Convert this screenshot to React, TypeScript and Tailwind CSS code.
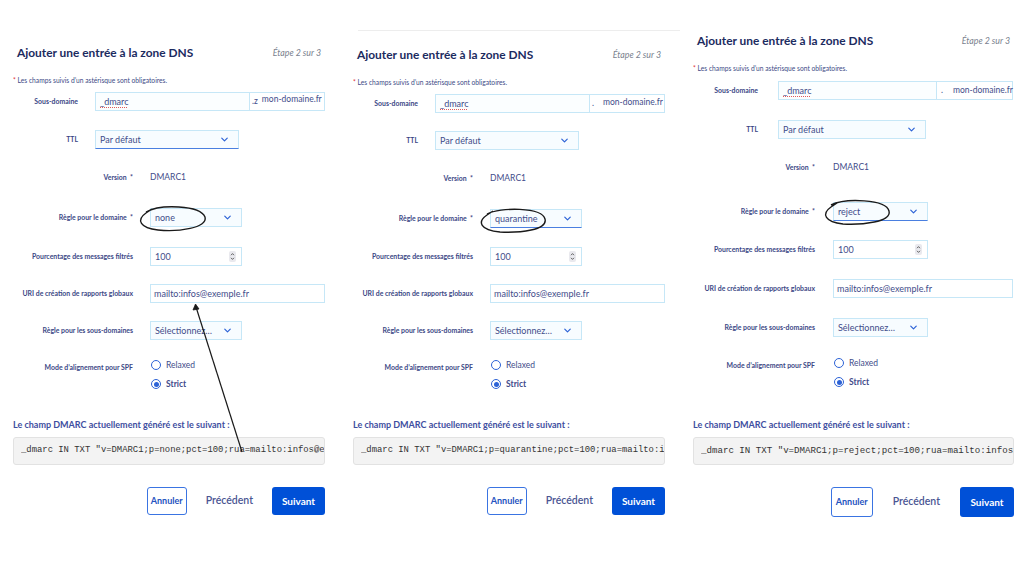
import React from "react";
import { ChevronDown } from "lucide-react";

type Cfg = {
  policy: string;
  wrap: string;
  topRule: boolean;
  header: string;
  noteMt: string;
  g1Label: string;
  g1Gap: string;
  g2Label: string;
  g2Gap: string;
  subW: string;
  sufW: string;
  ttlW: string;
  smallW: string;
  uriW: string;
  mts: string[];
  radiosMt: string;
  codeLabelMt: string;
  codeText: string;
  btnMt: string;
  btnH: string;
  annulerW: string;
  suivantW: string;
  btnGap: string;
  ttlFocus: boolean;
  ruleFocus: boolean;
  suffix: React.ReactNode;
};

const FONT = "font-['Lato','Open_Sans',sans-serif]";

function Label({ children, w }: { children: React.ReactNode; w: string }) {
  return (
    <div className={`${w} shrink-0 whitespace-nowrap text-right text-[6.9px] font-bold leading-none text-[#3b4785]`}>
      {children}
    </div>
  );
}

function Chevron() {
  return <ChevronDown size={11} strokeWidth={2.6} className="text-[#2c62d6]" />;
}

function Select({ value, w, focus }: { value: string; w: string; focus?: boolean }) {
  return (
    <div
      className={`${w} h-full flex items-center justify-between pl-[4px] pr-[8px] border border-[#c6e7f7] bg-[#f7fcff] ${
        focus ? "border-b-[#4a7fe0] border-b-[1.5px]" : ""
      }`}
    >
      <span className="text-[9px] text-[#3f4c8a]">{value}</span>
      <Chevron />
    </div>
  );
}

function Radio({ checked, label }: { checked?: boolean; label: string }) {
  return (
    <div className="flex h-[14px] items-center gap-[5px] pl-[1px]">
      <span className="flex h-[10px] w-[10px] items-center justify-center rounded-full border-[1.5px] border-[#2c62d6] bg-white">
        {checked && <span className="h-[5px] w-[5px] rounded-full bg-[#2c62d6]" />}
      </span>
      <span className={`text-[8.5px] text-[#3f4c8a] ${checked ? "font-bold" : ""}`}>{label}</span>
    </div>
  );
}

function Spinner() {
  return (
    <span className="flex h-[11px] w-[7px] flex-col items-center justify-center rounded-[2px] bg-[#e9e9ee]">
      <svg width="5" height="9" viewBox="0 0 5 9" fill="none" stroke="#555" strokeWidth="0.9">
        <path d="M1 3.2 L2.5 1.6 L4 3.2" />
        <path d="M1 5.8 L2.5 7.4 L4 5.8" />
      </svg>
    </span>
  );
}

function Panel({ c }: { c: Cfg }) {
  const row = "flex h-[19px] items-center";
  return (
    <div className={`${c.wrap} flex shrink-0 flex-col ${FONT}`}>
      {c.topRule && <div className="ml-[5px] -mr-[15px] h-px bg-[#ededed]" />}
      <div className={`${c.header} flex items-center justify-between pl-[4px]`}>
        <h2 className="whitespace-nowrap text-[11.9px] font-bold text-[#1c2b5f]">Ajouter une entrée à la zone DNS</h2>
        <span className="pr-[4px] text-[8.8px] italic text-[#7a7f8e]">Étape 2 sur 3</span>
      </div>
      <p className={`${c.noteMt} h-[8px] whitespace-nowrap text-[6.7px] leading-[8px] text-[#3d4a86]`}>
        <span className="text-[#e0303a]">*</span> Les champs suivis d’un astérisque sont obligatoires.
      </p>

      {/* Sous-domaine */}
      <div className={`${row} ${c.mts[0]} ${c.g1Gap}`}>
        <Label w={c.g1Label}>Sous-domaine</Label>
        <div className="flex h-full">
          <div className={`${c.subW} flex h-full items-center border border-[#c6e7f7] bg-[#fbfeff] pl-[4px] text-[9px] text-[#3f4c8a]`}>
            <span className="underline decoration-[#e05a5a] decoration-dotted decoration-[1px] underline-offset-[2px]">_dmarc</span>
          </div>
          <div className={`${c.sufW} flex h-full items-center whitespace-nowrap border border-l-0 border-[#c6e7f7] bg-white pl-[2px] text-[8.5px] text-[#3f4c8a]`}>
            {c.suffix}
          </div>
        </div>
      </div>

      {/* TTL */}
      <div className={`${row} ${c.mts[1]} ${c.g1Gap}`}>
        <Label w={c.g1Label}>TTL</Label>
        <Select value="Par défaut" w={c.ttlW} focus={c.ttlFocus} />
      </div>

      {/* Version */}
      <div className={`${row} ${c.mts[2]} ${c.g2Gap}`}>
        <Label w={c.g2Label}>Version&nbsp;&nbsp;*</Label>
        <span className="text-[8.5px] text-[#3f4c8a]">DMARC1</span>
      </div>

      {/* Règle pour le domaine */}
      <div className={`${row} ${c.mts[3]} ${c.g2Gap}`}>
        <Label w={c.g2Label}>Règle pour le domaine&nbsp;&nbsp;*</Label>
        <Select value={c.policy} w={c.smallW} focus={c.ruleFocus} />
      </div>

      {/* Pourcentage */}
      <div className={`${row} ${c.mts[4]} ${c.g2Gap}`}>
        <Label w={c.g2Label}>Pourcentage des messages filtrés</Label>
        <div className={`${c.smallW} flex h-full items-center justify-between border border-[#c6e7f7] bg-white pl-[4px] pr-[5px] text-[9px] text-[#3f4c8a]`}>
          <span>100</span>
          <Spinner />
        </div>
      </div>

      {/* URI */}
      <div className={`${row} ${c.mts[5]} ${c.g2Gap}`}>
        <Label w={c.g2Label}>URI de création de rapports globaux</Label>
        <div className={`${c.uriW} flex h-full items-center border border-[#c6e7f7] bg-white pl-[3px] text-[9px] text-[#3f4c8a]`}>
          mailto:infos@exemple.fr
        </div>
      </div>

      {/* Sous-domaines */}
      <div className={`${row} ${c.mts[6]} ${c.g2Gap}`}>
        <Label w={c.g2Label}>Règle pour les sous-domaines</Label>
        <Select value="Sélectionnez…" w={c.smallW} />
      </div>

      {/* SPF */}
      <div className={`flex ${c.radiosMt} ${c.g2Gap}`}>
        <div className="flex h-[14px] items-center pt-[5px]">
          <Label w={c.g2Label}>Mode d’alignement pour SPF</Label>
        </div>
        <div className="flex flex-col gap-[5px]">
          <Radio label="Relaxed" />
          <Radio label="Strict" checked />
        </div>
      </div>

      <p className={`${c.codeLabelMt} h-[12px] whitespace-nowrap text-[9px] font-bold leading-[12px] text-[#3e4ea0]`}>
        Le champ DMARC actuellement généré est le suivant :
      </p>
      <div className={`mt-[6px] flex h-[28px] items-center overflow-hidden whitespace-nowrap rounded-[3px] border border-[#e2e2e2] bg-[#f3f3f3] pl-[7px] font-['Liberation_Mono',monospace] ${c.codeText} text-[#333]`}>
        <span className="min-w-0 overflow-hidden">_dmarc IN TXT "v=DMARC1;p={c.policy};pct=100;rua=mailto:infos@exemple.fr"</span>
      </div>

      <div className={`${c.btnMt} ${c.btnH} ${c.btnGap} flex items-stretch justify-end`}>
        <button className={`${c.annulerW} rounded-[3px] border-[1.5px] border-[#3a74e2] bg-white text-[9px] font-bold text-[#2452c0]`}>
          Annuler
        </button>
        <span className="flex items-center text-[10.5px] font-semibold text-[#4a5592]">Précédent</span>
        <button className={`${c.suivantW} rounded-[3px] bg-[#0050d7] text-[10px] font-bold text-white`}>Suivant</button>
      </div>
    </div>
  );
}

const base = {
  topRule: false,
  g1Label: "w-[65px]",
  g2Label: "w-[120px]",
  g1Gap: "gap-[17px]",
  g2Gap: "gap-[17px]",
  subW: "w-[155px]",
  sufW: "w-[75px]",
  ttlW: "w-[144px]",
  smallW: "w-[92px]",
  uriW: "w-[175px]",
  noteMt: "mt-[13px]",
  codeText: "text-[8.9px]",
  btnH: "h-[28px]",
  annulerW: "w-[40px]",
  suivantW: "w-[53px]",
  btnGap: "gap-[19px]",
};

const p1: Cfg = {
  ...base,
  policy: "none",
  wrap: "w-[340px] pl-[13px] pr-[15px] pt-[43px]",
  header: "h-[20px]",
  mts: ["mt-[8px]", "mt-[19px]", "mt-[19px]", "mt-[21px]", "mt-[20px]", "mt-[18px]", "mt-[18px]"],
  radiosMt: "mt-[18px]",
  codeLabelMt: "mt-[28px]",
  btnMt: "mt-[22px]",
  ttlFocus: true,
  ruleFocus: false,
  suffix: (
    <span className="flex items-center gap-[4px]">
      <span>.z</span>
      <span className="-translate-y-[2px]">mon-domaine.fr</span>
    </span>
  ),
};

const p2: Cfg = {
  ...base,
  policy: "quarantine",
  wrap: "w-[340px] pl-[13px] pr-[15px] pt-[30px]",
  topRule: true,
  header: "h-[20px] mt-[14px]",
  mts: ["mt-[8px]", "mt-[18px]", "mt-[19px]", "mt-[21px]", "mt-[19px]", "mt-[18px]", "mt-[18px]"],
  radiosMt: "mt-[18px]",
  codeLabelMt: "mt-[28px]",
  btnMt: "mt-[22px]",
  ttlFocus: false,
  ruleFocus: true,
  suffix: (
    <span className="flex items-center gap-[9px]">
      <span>.</span>
      <span className="-translate-y-[1px]">mon-domaine.fr</span>
    </span>
  ),
};

const p3: Cfg = {
  ...base,
  policy: "reject",
  wrap: "w-[344px] pl-[13px] pr-[10px] pt-[31px]",
  header: "h-[20px]",
  g1Label: "w-[65px]",
  g2Label: "w-[122px]",
  g1Gap: "gap-[20px]",
  g2Gap: "gap-[18px]",
  subW: "w-[159px]",
  sufW: "w-[76px]",
  ttlW: "w-[148px]",
  smallW: "w-[95px]",
  uriW: "w-[180px]",
  mts: ["mt-[9px]", "mt-[20px]", "mt-[19px]", "mt-[25px]", "mt-[19px]", "mt-[20px]", "mt-[20px]"],
  radiosMt: "mt-[19px]",
  codeLabelMt: "mt-[30px]",
  codeText: "text-[9.15px]",
  btnMt: "mt-[22px]",
  btnH: "h-[30px]",
  annulerW: "w-[42px]",
  suivantW: "w-[54px]",
  btnGap: "gap-[20px]",
  ttlFocus: false,
  ruleFocus: true,
  suffix: (
    <span className="flex items-center gap-[10px] pl-[2px]">
      <span>.</span>
      <span>mon-domaine.fr</span>
    </span>
  ),
};

export default function App() {
  return (
    <div className="relative h-[576px] w-[1024px] overflow-hidden bg-white">
      <div className="flex">
        <Panel c={p1} />
        <Panel c={p2} />
        <Panel c={p3} />
      </div>

      {/* pen annotations */}
      <svg className="pointer-events-none absolute inset-0" width="1024" height="576" fill="none" stroke="#1a1a1a">
        <path d="M146 212 C160 204 200 205 205 217 C208 228 178 232 158 230 C140 228 136 220 146 213 L152 209" strokeWidth="1.4" />
        <path d="M487 214 C500 207 542 207 545 219 C548 230 520 233 500 232 C480 230 477 222 487 215 L493 211" strokeWidth="1.4" />
        <path d="M831 205 C845 198 886 199 889 211 C892 222 862 225 843 224 C825 222 821 214 831 207 L837 203" strokeWidth="1.4" />
        <line x1="242" y1="452" x2="196" y2="307" strokeWidth="1.2" />
        <path d="M193 310 L195.5 304 L199 309 Z" fill="#1a1a1a" strokeWidth="0.8" />
      </svg>
    </div>
  );
}
